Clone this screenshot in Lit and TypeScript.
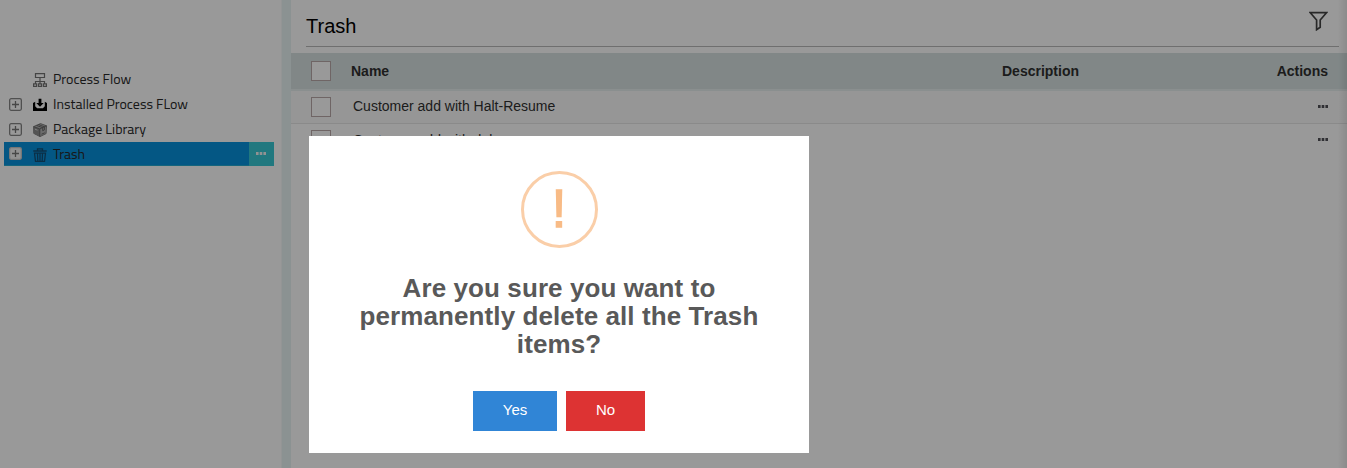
import { LitElement, html, css, svg } from "lit";
import { customElement } from "lit/decorators.js";

const icons = {
  flow: svg`<g fill="none" stroke="#747474" stroke-width="1.200"><path d="M2.500 .6h9v3.900h-9zM7 4.500v4M2.500 11v-2.500h9v2.500M7 8.500v2.500M.6 10.800h3v2.600h-3zM5.500 10.800h3v2.600h-3zM10.400 10.800h3v2.600h-3z"/></g>`,
  install: svg`<path fill="#000" d="M5.600 .8h2.800v4.200h2.300L7 8.700 3.300 5h2.300z"/><path fill="#000" d="M0 5l2.200-1.300v4.600l1.900 1.900h5.800l1.900-1.900V3.700L14 5v8H0z"/>`,
  pack: svg`<path fill="#b4b4b4" stroke="#757575" stroke-width=".9" d="M.6 3.600 7.500.6l6 2.200-.4 7.800-6.100 3L.8 10.400z"/><path fill="#8a8a8a" d="M.6 3.600 6.800 6v7.500l-6-3z"/><path fill="none" stroke="#626262" stroke-width=".9" d="m.6 3.600 6.200 2.300 6.700-3.100M6.800 6v7.400M3.500 2.400l6.200 2.300v3l1.700-.8v-3L5.500 1.500M8.500 11.200l3.300-1.400"/><path stroke="#ddd" stroke-width=".9" d="M2 6.200l2.500 1"/>`,
  trash: svg`<g fill="none" stroke="#134f76" stroke-width="1.300"><path d="M.3 3h13.400M4.500 2.800V.8h5v2M1.500 5.200h11l-1 8.200h-9zM4.500 5.300l.3 7.800M7 5.300v7.800M9.500 5.300l-.3 7.800"/></g>`,
};

const tree = [
  { label: "Process Flow", icon: icons.flow, expandable: false, cls: "flow" },
  { label: "Installed Process FLow", icon: icons.install, expandable: true, cls: "inst" },
  { label: "Package Library", icon: icons.pack, expandable: true, cls: "pack" },
  { label: "Trash", icon: icons.trash, expandable: true, cls: "selected" },
];

@customElement("app-root")
export class AppRoot extends LitElement {
  static styles = css`
    :host { display: block; position: relative; height: 468px; overflow: hidden; background: #fff; font: 14px "Liberation Sans", Arial, sans-serif; color: #303030; }
    * { box-sizing: border-box; }
    svg { display: block; flex: none; }
    .page { display: flex; height: 100%; }
    .side { width: 281px; padding: 67px 7px 0 4px; }
    .node { display: flex; align-items: center; height: 25px; padding-left: 5px; font: 14px "Titillium Web", Roboto, sans-serif; color: #282828; }
    .node .pm { width: 13px; margin-right: 11px; }
    .node .ic { margin: 1px 6px 0 0; }
    .node .name { padding-bottom: 2px; }
    .selected { height: 24px; background: #0891dc; border-bottom: 1px solid #23a9d0; }
    .selected .name { padding-bottom: 0; }
    .selected .ic { margin-top: 2px; }
    .more { margin-left: auto; align-self: stretch; width: 25px; margin-bottom: -1px; padding: 0 2px 2px 0; background: #37c8d4; display: flex; align-items: center; justify-content: center; }
    .bar { width: 10px; background: #e8f3f3; border-left: 1px solid #f5f8f8; }
    .main { flex: 1; position: relative; }
    .top { display: flex; justify-content: space-between; height: 47px; margin: 0 8px 0 15px; border-bottom: 1px solid #b9b9b9; }
    .top h1 { font-size: 20px; font-weight: 400; line-height: 23px; margin: 15px 0 0; color: #000; }
    .funnel { margin: 11px 11px 0 0; }
    .row { display: grid; grid-template-columns: 40px 651px 1fr auto; align-items: center; height: 33px; padding: 0 19px 0 20px; }
    .row .name { padding: 0 0 2px 2px; }
    .row svg { margin-bottom: 2px; }
    .head { height: 38px; margin-top: 6px; background: #d7e2e2; border-bottom: 2px solid #e7eeee; font-weight: 700; }
    .head + .row { border-bottom: 1px solid #e6e6e6; background: #fbfbfb; }
    .box { width: 20px; height: 20px; border: 1px solid #b9a9a9; background: #fff; }
    .row + .row + .row .box { margin-top: -1px; }
    .edge { position: absolute; inset: 0 0 0 auto; width: 9px; background: linear-gradient(90deg, transparent, rgba(0,0,0,.09)); }
    .veil { position: absolute; inset: 0; background: rgba(0,0,0,.4); }
    .dialog { position: absolute; left: 309px; top: 136px; width: 500px; height: 317px; background: #fff; display: flex; flex-direction: column; align-items: center; padding-top: 35px; }
    .warn { width: 77px; height: 77px; border: 3px solid #facea8; border-radius: 50%; display: flex; align-items: center; justify-content: center; padding-bottom: 2px; font-size: 54px; line-height: 69px; color: #f8bb86; -webkit-text-stroke: 1.300px #f8bb86; }
    .dialog h2 { margin: 26px 0 0; width: 420px; text-align: center; font-size: 26px; line-height: 28px; font-weight: 700; letter-spacing: .09px; color: #595959; }
    .btns { display: flex; gap: 9px; margin-top: 33px; }
    .btn { height: 40px; width: 84px; border: 0; padding: 0 0 3px; color: #fff; font: 15px "Liberation Sans", Arial, sans-serif; background: #3085d6; }
    .no { width: 79px; background: #dd3333; }
  `;

  dots(color: string) {
    return html`<svg width="10" height="3" viewBox="0 0 10 3"><path fill=${color} d="M0 0h2.600v3H0zM3.700 0h2.600v3H3.700zM7.400 0H10v3H7.400z"/></svg>`;
  }

  plus(on: boolean) {
    return html`<svg width="13" height="13" viewBox="0 0 13 13"><rect x=".65" y=".65" width="11.700" height="11.700" rx="1.500" fill=${on ? "#f4f4f4" : "none"} stroke=${on ? "#c7c7c7" : "#858585"} stroke-width="1.300"/><path d="M3 6.500h7M6.500 3v7" stroke="#777" stroke-width="1.300"/></svg>`;
  }

  render() {
    return html`
      <div class="page">
        <nav class="side">
          ${tree.map((n) => html`
            <div class="node ${n.cls}">
              <span class="pm">${n.expandable ? this.plus(n.cls === "selected") : ""}</span>
              <svg class="ic" width="14" height="14" viewBox="0 0 14 14">${n.icon}</svg>
              <span class="name">${n.label}</span>
              ${n.cls === "selected" ? html`<span class="more">${this.dots("#f4f4f4")}</span>` : ""}
            </div>`)}
        </nav>
        <div class="bar"></div>
        <main class="main">
          <header class="top">
            <h1>Trash</h1>
            <svg class="funnel" width="19" height="20" viewBox="0 0 19 20"><path d="M1.300 1.700h16.200L11.200 9v7.300l-3.600 2.400V9z" fill="none" stroke="#444" stroke-width="1.700"/></svg>
          </header>
          <div class="row head"><span class="box"></span><span>Name</span><span>Description</span><span>Actions</span></div>
          ${["Customer add with Halt-Resume", "Customer add with delay"].map((t) => html`
            <div class="row"><span class="box"></span><span class="name">${t}</span><span></span>${this.dots("#505058")}</div>`)}
          <div class="edge"></div>
        </main>
      </div>
      <div class="veil"></div>
      <section class="dialog">
        <div class="warn">!</div>
        <h2>Are you sure you want to permanently delete all the Trash items?</h2>
        <div class="btns"><button class="btn">Yes</button><button class="btn no">No</button></div>
      </section>`;
  }
}
